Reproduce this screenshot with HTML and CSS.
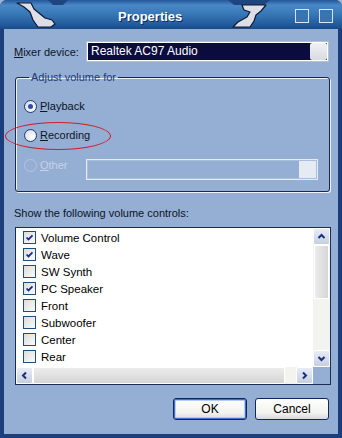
FILE: index.html
```html
<!DOCTYPE html>
<html lang="en">
<head>
    <meta charset="UTF-8">
    <meta name="viewport" content="width=device-width, initial-scale=1.0">
    <title>Properties</title>
    <link rel="stylesheet" href="styles.css">
</head>
<body>
    <div class="window">
        <div class="titlebar">
            <svg class="deco" width="342" height="29" viewBox="0 0 342 29">
                <path class="bump" d="M48 0 L68 0 L63 5 L53 5 Z"/>
                <path class="bump" d="M228 0 L270 0 L264 5 L234 5 Z"/>
                <path class="piece" d="M17 3 L31 3 L34 9 L45 18 L52 20 L55 24 L51 27 L38 27 L33 20 L30 12 L24 7 Z"/>
                <path class="piece" d="M242 5 L266 5 L261 11 L256 15 L254 21 L250 27 L233 27 L238 22 L247 17 L250 12 L244 10 Z"/>
            </svg>
            <span class="title">Properties</span>
            <div class="caption-buttons">
                <span class="cap-btn"></span>
                <span class="cap-btn"></span>
            </div>
        </div>

        <div class="client">
            <div class="mixer-row">
                <span class="field-label"><u>M</u>ixer device:</span>
                <div class="combo">
                    <span class="combo-text">Realtek AC97 Audio</span>
                    <span class="combo-btn"></span>
                </div>
            </div>

            <fieldset class="group">
                <legend>Adjust volume for</legend>
                <div class="option">
                    <span class="radio checked"></span>
                    <span><u>P</u>layback</span>
                </div>
                <div class="option recording">
                    <span class="radio"></span>
                    <span><u>R</u>ecording</span>
                    <span class="circle-mark"></span>
                </div>
                <div class="option other disabled">
                    <span class="radio"></span>
                    <span class="other-label"><u>O</u>ther</span>
                    <div class="combo combo-disabled">
                        <span class="combo-text"></span>
                        <span class="combo-btn"></span>
                    </div>
                </div>
            </fieldset>

            <p class="list-caption">Show the following volume controls:</p>

            <div class="listbox">
                <ul class="items">
                    <li><span class="check on"><svg viewBox="0 0 13 13"><path d="M3 6.5 L5.3 8.8 L10 4"/></svg></span>Volume Control</li>
                    <li><span class="check on"><svg viewBox="0 0 13 13"><path d="M3 6.5 L5.3 8.8 L10 4"/></svg></span>Wave</li>
                    <li><span class="check"></span>SW Synth</li>
                    <li><span class="check on"><svg viewBox="0 0 13 13"><path d="M3 6.5 L5.3 8.8 L10 4"/></svg></span>PC Speaker</li>
                    <li><span class="check"></span>Front</li>
                    <li><span class="check"></span>Subwoofer</li>
                    <li><span class="check"></span>Center</li>
                    <li><span class="check"></span>Rear</li>
                </ul>
                <div class="vscroll">
                    <span class="sb-btn"><svg viewBox="0 0 9 9"><path d="M1.5 6 L4.5 3 L7.5 6"/></svg></span>
                    <span class="sb-thumb"></span>
                    <span class="sb-track"></span>
                    <span class="sb-btn"><svg viewBox="0 0 9 9"><path d="M1.5 3 L4.5 6 L7.5 3"/></svg></span>
                </div>
                <div class="hscroll">
                    <span class="sb-btn"><svg viewBox="0 0 9 9"><path d="M6 1.5 L3 4.5 L6 7.5"/></svg></span>
                    <span class="sb-thumb"></span>
                    <span class="sb-track"></span>
                    <span class="sb-btn"><svg viewBox="0 0 9 9"><path d="M3 1.5 L6 4.5 L3 7.5"/></svg></span>
                </div>
                <div class="corner"></div>
            </div>

            <div class="actions">
                <button class="btn default">OK</button>
                <button class="btn">Cancel</button>
            </div>
        </div>
    </div>
</body>
</html>
```

FILE: styles.css
```css
body {
    margin: 0;
    background: #9fb3d2;
    font-family: "Liberation Sans", Arial, sans-serif;
    font-size: 11px;
    color: #000;
}
.window {
    width: 342px;
    height: 438px;
    box-sizing: border-box;
    display: flex;
    flex-direction: column;
    background: #1b3f7c;
    border-radius: 7px 7px 0 0;
    padding: 0 4px 4px 4px;
}
.titlebar {
    position: relative;
    height: 29px;
    margin: 0 -4px;
    flex: 0 0 auto;
    display: flex;
    align-items: center;
    border-radius: 7px 7px 0 0;
    background: linear-gradient(to bottom, #24569a 0, #4a88c6 18%, #3776b6 50%, #215b9c 85%, #1a4a88 100%);
}
.deco {
    position: absolute;
    left: 0;
    top: 0;
}
.deco .bump {
    fill: #1d4580;
}
.deco .piece {
    fill: #dedfe6;
    stroke: #101830;
    stroke-width: 1.2;
    stroke-linejoin: round;
}
.title {
    position: relative;
    margin-left: 118px;
    padding-top: 3px;
    color: #fff;
    font-weight: bold;
    font-size: 13px;
    text-shadow: 1px 1px 0 #0d2a5a;
}
.caption-buttons {
    margin-left: auto;
    margin-right: 9px;
    display: flex;
    gap: 10px;
    margin-top: 2px;
}
.cap-btn {
    width: 12px;
    height: 12px;
    border: 1px solid #d6e6f6;
    background: #3a74b0;
}
.client {
    flex: 1;
    background: #95aed3;
    padding: 0 9px 0 11px;
    display: flex;
    flex-direction: column;
}
.mixer-row {
    display: flex;
    align-items: center;
    margin: 12px 0 0 -1px;
}
.field-label {
    width: 72px;
    flex: 0 0 72px;
    color: #0c1428;
}
.combo {
    flex: 1;
    height: 21px;
    box-sizing: border-box;
    display: flex;
    border: 1px solid #b4c0d4;
    box-shadow: inset 0 0 0 1px #fff;
    background: #0a0b3e;
}
.combo-text {
    flex: 1;
    color: #fff;
    line-height: 19px;
    padding-left: 4px;
    font-size: 12px;
}
.combo-btn {
    width: 17px;
    margin: 1px;
    border-radius: 2px;
    background: linear-gradient(to bottom, #f2f2f4, #d8dae2);
}
.group {
    position: relative;
    margin: 9px -1px 0 0;
    padding: 12px 11px 11px 8px;
    border: 1px solid #1c2750;
    border-radius: 3px;
    box-shadow: 1px 1px 0 #eef2fa, inset 1px 1px 0 #eef2fa;
}
.group legend {
    padding: 0 2px;
    margin-left: 5px;
    line-height: 13px;
    color: #1b3a78;
}
.option {
    position: relative;
    display: flex;
    align-items: center;
    height: 20px;
    gap: 3px;
    color: #0c1428;
}
.option.recording {
    margin-top: 9px;
}
.option.other {
    margin-top: 14px;
    height: 21px;
    align-items: flex-start;
}
.other-label {
    width: 43px;
    line-height: 13px;
}
.radio {
    width: 13px;
    height: 13px;
    box-sizing: border-box;
    border-radius: 50%;
    border: 1px solid #1c3e78;
    background: radial-gradient(circle at 65% 65%, #ffffff 0, #e6e6ec 60%, #c8c8d2 100%);
    display: flex;
    align-items: center;
    justify-content: center;
}
.radio.checked::after {
    content: "";
    width: 5px;
    height: 5px;
    border-radius: 50%;
    background: #2a4fa8;
}
.disabled {
    color: #c7d3e6;
}
.disabled .radio {
    border-color: #b8c6dc;
    background: transparent;
}
.circle-mark {
    position: absolute;
    left: -19px;
    top: -3px;
    width: 104px;
    height: 26px;
    border: 1px solid #d01e2e;
    border-radius: 50%;
}
.combo-disabled {
    border: 1px solid #e6ecf6;
    box-shadow: inset 0 0 0 1px #a9bedc;
    background: #95aed3;
}
.combo-disabled .combo-btn {
    background: #e6eaf2;
    border-radius: 0;
    margin: 1px 1px 1px 0;
}
.list-caption {
    margin: 15px 0 0 -1px;
    line-height: 13px;
    color: #0c1428;
}
.listbox {
    margin: 7px -2px 0 0;
    height: 158px;
    box-sizing: border-box;
    border: 1px solid #1c2b58;
    background: #fff;
    display: grid;
    grid-template-columns: 1fr 17px;
    grid-template-rows: 1fr 17px;
}
.items {
    list-style: none;
    margin: 0;
    padding: 1px 0 0 7px;
    overflow: hidden;
}
.items li {
    display: flex;
    align-items: center;
    height: 17px;
    gap: 5px;
    font-size: 11.5px;
}
.check {
    width: 13px;
    height: 13px;
    box-sizing: border-box;
    border: 1px solid #1c4f80;
    background: linear-gradient(135deg, #dcdcd7, #fbfbfb);
}
.check svg {
    display: block;
    width: 11px;
    height: 11px;
}
.check svg path {
    fill: none;
    stroke: #21218c;
    stroke-width: 2;
}
.vscroll, .hscroll {
    display: flex;
    background: #f3f3f0;
}
.vscroll {
    flex-direction: column;
}
.sb-btn {
    width: 17px;
    height: 17px;
    flex: 0 0 17px;
    box-sizing: border-box;
    border: 1px solid #fff;
    border-radius: 2px;
    background: linear-gradient(to bottom, #e8ecf6, #c6cfe0);
    display: flex;
    align-items: center;
    justify-content: center;
}
.sb-btn svg {
    width: 9px;
    height: 9px;
}
.sb-btn svg path {
    fill: none;
    stroke: #1a2e7a;
    stroke-width: 2;
}
.vscroll .sb-thumb {
    height: 52px;
    margin: 0 1px;
    border: 1px solid #fff;
    background: linear-gradient(to right, #ececec, #d6d6d6);
}
.hscroll .sb-thumb {
    width: 250px;
    border: 1px solid #fff;
    background: linear-gradient(to bottom, #ececec, #d6d6d6);
}
.sb-track {
    flex: 1;
}
.corner {
    background: #95aed3;
}
.actions {
    display: flex;
    justify-content: flex-end;
    gap: 8px;
    margin-top: 13px;
}
.btn {
    width: 74px;
    height: 22px;
    font-family: inherit;
    font-size: 12px;
    color: #000;
    border: 1px solid #12285a;
    border-radius: 3px;
    background: linear-gradient(to bottom, #ffffff, #f2f2ee 70%, #d8d8e0);
    padding: 0;
}
.btn.default {
    box-shadow: inset 0 0 0 1px #3e6fc8, inset 0 0 0 2px #b6cdf4;
}
```
